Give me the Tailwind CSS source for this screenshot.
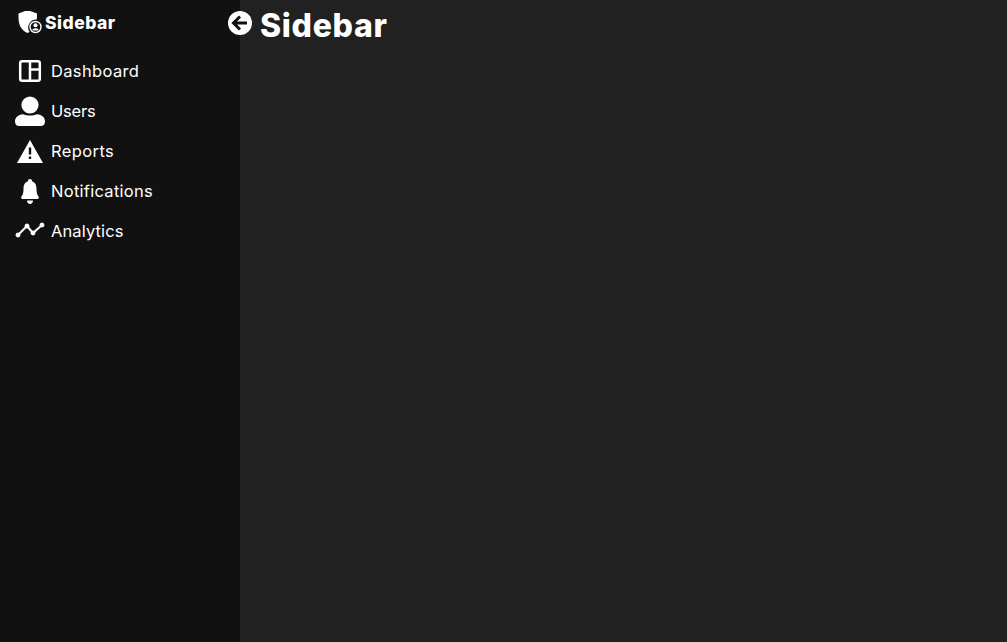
<!DOCTYPE html>
<html lang="en">
<head>
    <meta charset="UTF-8">
    <meta name="viewport" content="width=device-width, initial-scale=1.0">
    <title>Sidebar</title>
    <script src="https://cdn.jsdelivr.net/npm/@tailwindcss/browser@4"></script>
</head>
<body class="bg-[#212121] text-white antialiased font-['Inter','Noto_Sans',sans-serif]">
    <div class="flex h-screen overflow-hidden">
        <aside class="w-[240px] shrink-0 bg-[#111111]">
            <div class="flex items-center h-[24px] mt-[11px] pl-[17px] gap-[1px]">
                <svg class="w-[27px] h-[24px]" viewBox="0 0 27 24" fill="white">
                    <path d="M10.5 -1 L20 2.6 C20 5 20 6.5 19.8 8.5 A8 8 0 0 0 12.5 20.8 C11.8 21.3 11.2 21.6 10.5 21.9 C4.5 19.5 1.5 14.5 1.5 6 L1.5 2.6 Z"/>
                    <circle cx="18.5" cy="16" r="6.2"/>
                    <circle cx="18.5" cy="16" r="4.8" fill="#111111"/>
                    <circle cx="18.5" cy="14.2" r="2"/>
                    <path d="M15.2 19.6 C15.4 16.4 21.6 16.4 21.8 19.6 Z"/>
                </svg>
                <span class="text-[17.5px] leading-none font-extrabold tracking-[0.5px]">Sidebar</span>
            </div>
            <nav class="mt-[16px] flex flex-col">
                <a class="flex items-center h-[40px]">
                    <span class="flex justify-center w-[60px]">
                        <svg class="w-[24px] h-[24px]" viewBox="0 0 24 24" fill="none" stroke="white" stroke-width="2.5">
                            <rect x="2.2" y="2.2" width="19.6" height="19.6" rx="2"/>
                            <path d="M12 2 V22 M12 10.5 H22"/>
                        </svg>
                    </span>
                    <span class="text-[16.5px] -ml-[9px] tracking-[0.35px]">Dashboard</span>
                </a>
                <a class="flex items-center h-[40px]">
                    <span class="flex justify-center w-[60px]">
                        <svg class="w-[30px] h-[30px]" viewBox="0 0 30 30" fill="white">
                            <circle cx="15" cy="9" r="8.6"/>
                            <path d="M0 25.5 C0 21 4 18.5 8 18.3 C12 20 18 20 22 18.3 C26 18.5 30 21 30 25.5 C30 28.5 28 30 26 30 H4 C2 30 0 28.5 0 25.5 Z"/>
                        </svg>
                    </span>
                    <span class="text-[16.5px] -ml-[9px] tracking-[-0.2px]">Users</span>
                </a>
                <a class="flex items-center h-[40px]">
                    <span class="flex justify-center w-[60px]">
                        <svg class="w-[26px] h-[23px]" viewBox="0 0 26 23" fill="white">
                            <path fill-rule="evenodd" d="M13 0 L26 23 H0 Z M11.8 7.5 H14.2 V14.5 H11.8 Z M11.8 16.5 H14.2 V19 H11.8 Z"/>
                        </svg>
                    </span>
                    <span class="text-[16.5px] -ml-[9px] tracking-[0.4px]">Reports</span>
                </a>
                <a class="flex items-center h-[40px]">
                    <span class="flex justify-center w-[60px]">
                        <svg class="w-[18px] h-[25px]" viewBox="0 0 18 25" fill="white">
                            <path d="M9 0 C10.2 0 11 .8 11 2.2 C14.5 3.4 15.5 6.5 15.5 10 C15.5 14 16.2 16 17.6 17.6 C18.2 18.6 17.6 20 16.5 20 H1.5 C.4 20 -.2 18.6 .4 17.6 C1.8 16 2.5 14 2.5 10 C2.5 6.5 3.5 3.4 7 2.2 C7 .8 7.8 0 9 0 Z"/>
                            <path d="M6 21.5 H12 C12 23.5 10.6 25 9 25 C7.4 25 6 23.5 6 21.5 Z"/>
                        </svg>
                    </span>
                    <span class="text-[16.5px] -ml-[9px] tracking-[0.28px]">Notifications</span>
                </a>
                <a class="flex items-center h-[40px]">
                    <span class="flex justify-center w-[60px]">
                        <svg class="w-[30px] h-[20px]" viewBox="0 0 30 20" fill="white" stroke="white">
                            <path d="M3 14 L12 5 L18 12 L27 4" fill="none" stroke-width="2"/>
                            <circle cx="3" cy="14" r="2"/>
                            <circle cx="12" cy="5" r="2"/>
                            <circle cx="18" cy="12" r="2"/>
                            <circle cx="27" cy="4" r="2"/>
                        </svg>
                    </span>
                    <span class="text-[16.5px] -ml-[9px] tracking-[0.12px]">Analytics</span>
                </a>
            </nav>
        </aside>
        <main class="flex-1 min-w-0">
            <div class="flex items-start -ml-[12px] mt-[11px]">
                <svg class="w-[24px] h-[24px] shrink-0" viewBox="0 0 24 24">
                    <circle cx="12" cy="12" r="12" fill="white"/>
                    <path d="M12 5.5 L5.5 12 L12 18.5 M6 12 H19" fill="none" stroke="#111111" stroke-width="3"/>
                </svg>
                <h1 class="ml-[8px] -mt-[1px] text-[32px] leading-[32px] font-extrabold tracking-[0.7px]">Sidebar</h1>
            </div>
        </main>
    </div>
</body>
</html>
